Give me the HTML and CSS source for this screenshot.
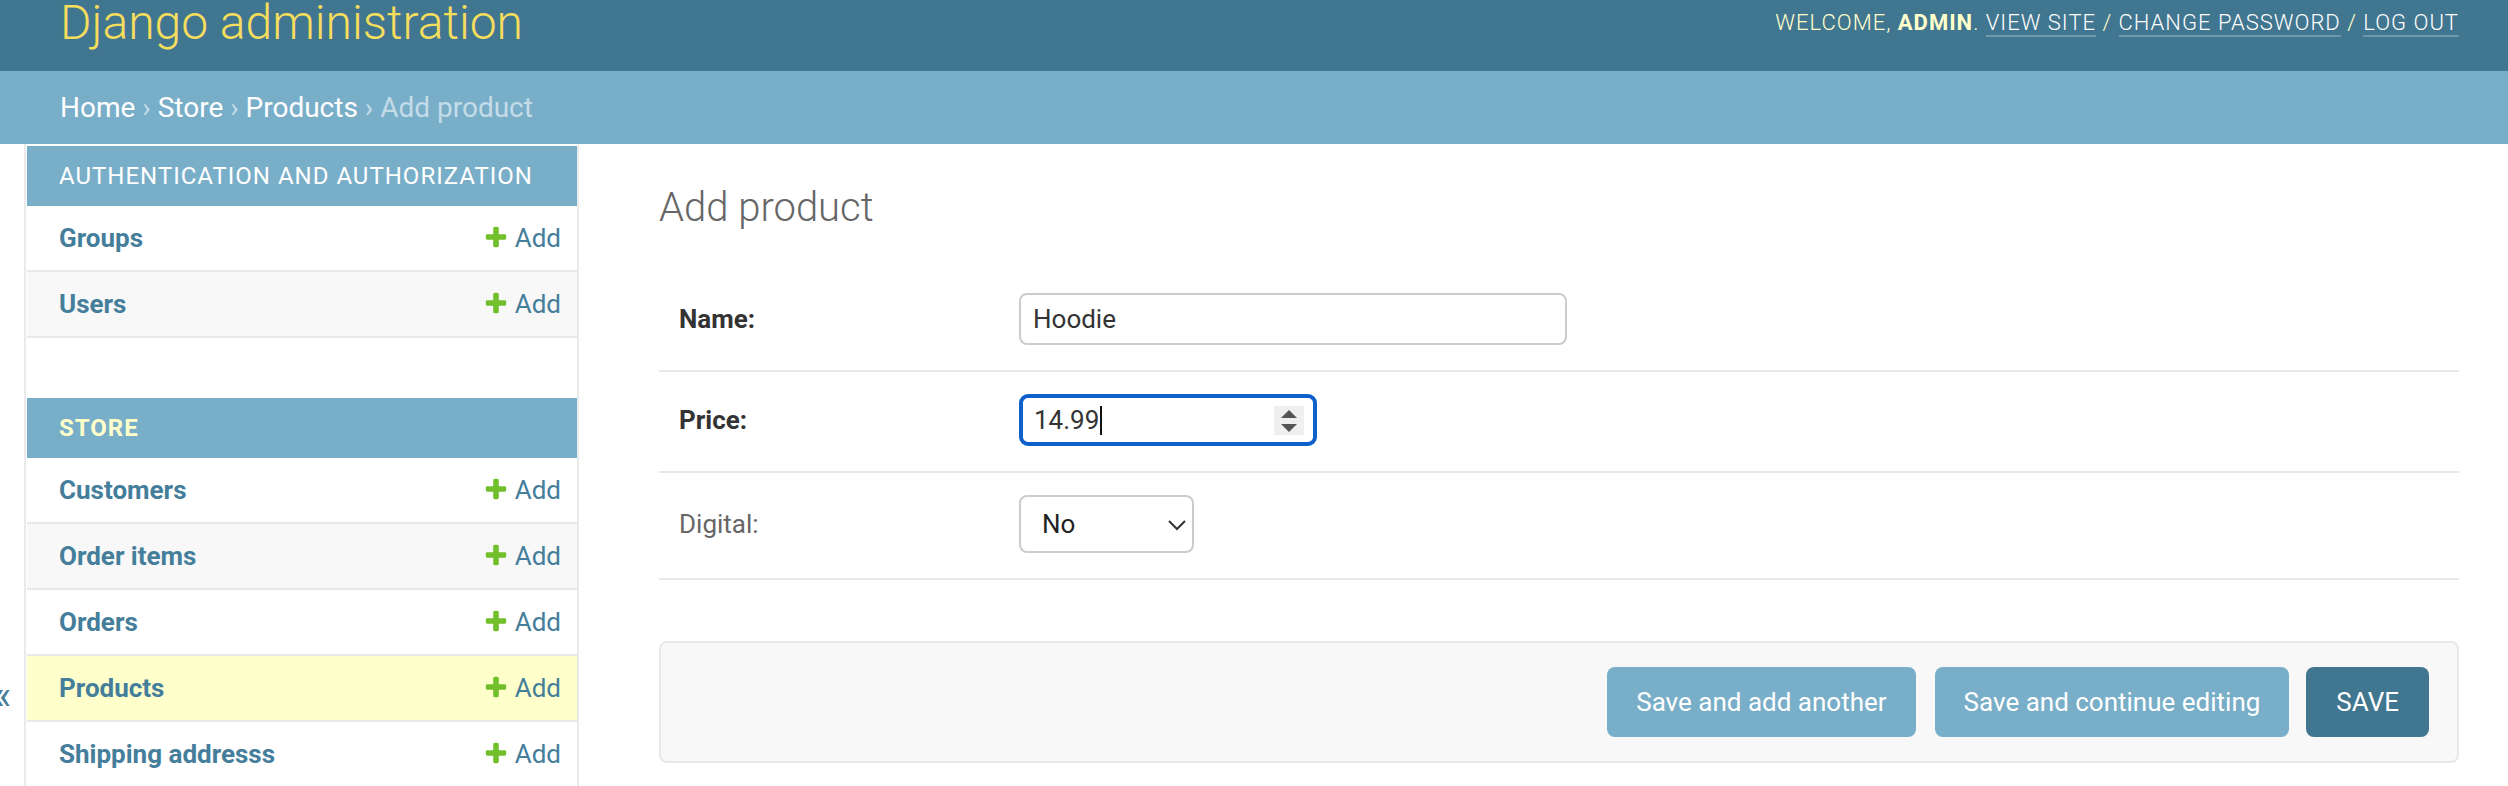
FILE: index.html
```html
<!DOCTYPE html>
<html lang="en">
<head>
<meta charset="utf-8">
<title>Add product | Django site admin</title>
<link rel="stylesheet" href="styles.css">
</head>
<body>
<div class="page">
  <header class="header">
    <h1 class="site-name">Django administration</h1>
    <div class="user-tools">Welcome, <strong>admin</strong>. <a href="#">View site</a> / <a href="#">Change password</a> / <a href="#">Log out</a></div>
  </header>
  <nav class="breadcrumbs"><a href="#">Home</a> › <a href="#">Store</a> › <a href="#">Products</a> › Add product</nav>
  <div class="main">
    <button class="toggle-nav" type="button">«</button>
    <aside class="sidebar">
      <div class="module">
        <table>
          <caption><a class="section" href="#">Authentication and Authorization</a></caption>
          <tbody>
            <tr><th><a href="#">Groups</a></th><td><a class="addlink" href="#"><svg class="plus" viewBox="0 0 1792 1792"><path fill="#70bf2b" d="M1600 796v192q0 40-28 68t-68 28h-416v416q0 40-28 68t-68 28h-192q-40 0-68-28t-28-68v-416h-416q-40 0-68-28t-28-68v-192q0-40 28-68t68-28h416v-416q0-40 28-68t68-28h192q40 0 68 28t28 68v416h416q40 0 68 28t28 68z"/></svg>Add</a></td></tr>
            <tr><th><a href="#">Users</a></th><td><a class="addlink" href="#"><svg class="plus" viewBox="0 0 1792 1792"><path fill="#70bf2b" d="M1600 796v192q0 40-28 68t-68 28h-416v416q0 40-28 68t-68 28h-192q-40 0-68-28t-28-68v-416h-416q-40 0-68-28t-28-68v-192q0-40 28-68t68-28h416v-416q0-40 28-68t68-28h192q40 0 68 28t28 68v416h416q40 0 68 28t28 68z"/></svg>Add</a></td></tr>
          </tbody>
        </table>
      </div>
      <div class="module current-app">
        <table>
          <caption><a class="section" href="#">Store</a></caption>
          <tbody>
            <tr><th><a href="#">Customers</a></th><td><a class="addlink" href="#"><svg class="plus" viewBox="0 0 1792 1792"><path fill="#70bf2b" d="M1600 796v192q0 40-28 68t-68 28h-416v416q0 40-28 68t-68 28h-192q-40 0-68-28t-28-68v-416h-416q-40 0-68-28t-28-68v-192q0-40 28-68t68-28h416v-416q0-40 28-68t68-28h192q40 0 68 28t28 68v416h416q40 0 68 28t28 68z"/></svg>Add</a></td></tr>
            <tr><th><a href="#">Order items</a></th><td><a class="addlink" href="#"><svg class="plus" viewBox="0 0 1792 1792"><path fill="#70bf2b" d="M1600 796v192q0 40-28 68t-68 28h-416v416q0 40-28 68t-68 28h-192q-40 0-68-28t-28-68v-416h-416q-40 0-68-28t-28-68v-192q0-40 28-68t68-28h416v-416q0-40 28-68t68-28h192q40 0 68 28t28 68v416h416q40 0 68 28t28 68z"/></svg>Add</a></td></tr>
            <tr><th><a href="#">Orders</a></th><td><a class="addlink" href="#"><svg class="plus" viewBox="0 0 1792 1792"><path fill="#70bf2b" d="M1600 796v192q0 40-28 68t-68 28h-416v416q0 40-28 68t-68 28h-192q-40 0-68-28t-28-68v-416h-416q-40 0-68-28t-28-68v-192q0-40 28-68t68-28h416v-416q0-40 28-68t68-28h192q40 0 68 28t28 68v416h416q40 0 68 28t28 68z"/></svg>Add</a></td></tr>
            <tr class="current-model"><th><a href="#">Products</a></th><td><a class="addlink" href="#"><svg class="plus" viewBox="0 0 1792 1792"><path fill="#70bf2b" d="M1600 796v192q0 40-28 68t-68 28h-416v416q0 40-28 68t-68 28h-192q-40 0-68-28t-28-68v-416h-416q-40 0-68-28t-28-68v-192q0-40 28-68t68-28h416v-416q0-40 28-68t68-28h192q40 0 68 28t28 68v416h416q40 0 68 28t28 68z"/></svg>Add</a></td></tr>
            <tr><th><a href="#">Shipping addresss</a></th><td><a class="addlink" href="#"><svg class="plus" viewBox="0 0 1792 1792"><path fill="#70bf2b" d="M1600 796v192q0 40-28 68t-68 28h-416v416q0 40-28 68t-68 28h-192q-40 0-68-28t-28-68v-416h-416q-40 0-68-28t-28-68v-192q0-40 28-68t68-28h416v-416q0-40 28-68t68-28h192q40 0 68 28t28 68v416h416q40 0 68 28t28 68z"/></svg>Add</a></td></tr>
          </tbody>
        </table>
      </div>
    </aside>
    <main class="content">
      <h1 class="page-title">Add product</h1>
      <form>
        <fieldset class="fieldset">
          <div class="form-row">
            <label class="required">Name:</label>
            <div class="text-box name-box">Hoodie</div>
          </div>
          <div class="form-row">
            <label class="required">Price:</label>
            <div class="text-box price-box">
              <span class="value">14.99</span><span class="caret"></span>
              <span class="spinner"><svg viewBox="0 0 30 29" width="30" height="29"><polygon points="7,12 15,4 23,12" fill="#555"/><polygon points="7,18 23,18 15,26" fill="#555"/></svg></span>
            </div>
          </div>
          <div class="form-row">
            <label>Digital:</label>
            <div class="select-box"><span class="value">No</span><svg class="chevron" viewBox="0 0 18 11" width="18" height="11"><path d="M1 1 L9 9 L17 1" fill="none" stroke="#333" stroke-width="2"/></svg></div>
          </div>
        </fieldset>
        <div class="submit-row">
          <button class="btn" type="button">Save and add another</button>
          <button class="btn" type="button">Save and continue editing</button>
          <button class="btn default" type="button">Save</button>
        </div>
      </form>
    </main>
  </div>
</div>
</body>
</html>
```
FILE: styles.css
```css
* { box-sizing: border-box; }
html, body { margin: 0; padding: 0; }
body {
  overflow: hidden;
  background: #fff;
  color: #333;
  font-family: Roboto, "Liberation Sans", sans-serif;
}
.page {
  width: 2559px;
  margin: -25px 0 0 -20px;
}
a { color: #447e9b; text-decoration: none; }

/* header */
.header {
  display: flex;
  justify-content: space-between;
  align-items: center;
  padding: 20px 80px;
  background: #417690;
  color: #ffc;
}
.site-name {
  margin: 0 40px 0 0;
  font-size: 48px;
  line-height: 56px;
  font-weight: 300;
  color: #f5dd5d;
}
.user-tools {
  font-size: 22px;
  line-height: 28px;
  letter-spacing: 1px;
  text-transform: uppercase;
  font-weight: 300;
}
.user-tools strong { font-weight: 700; }
.user-tools a {
  color: #fff;
  border-bottom: 2px solid rgba(255, 255, 255, 0.25);
}

/* breadcrumbs */
.breadcrumbs {
  padding: 20px 80px;
  background: #79aec8;
  color: #c4dce8;
  font-size: 28px;
  line-height: 33px;
}
.breadcrumbs a { color: #fff; }

/* main */
.main {
  display: flex;
  height: 1102px;
}
.toggle-nav {
  flex: 0 0 46px;
  display: flex;
  align-items: center;
  justify-content: center;
  padding: 0;
  border: 0;
  border-right: 2px solid #eaeaea;
  background: #fff;
  color: #447e9b;
  font-family: inherit;
  font-size: 40px;
}
.sidebar {
  flex: 0 0 552px;
  margin-left: 1px;
  border-top: 2px solid transparent;
  border-right: 2px solid #eaeaea;
  overflow: hidden;
}
.module { margin-bottom: 60px; }
.module table {
  width: 100%;
  border-collapse: collapse;
}
.module caption {
  padding: 16px 16px 16px 32px;
  text-align: left;
  background: #79aec8;
  font-size: 24px;
  line-height: 28px;
  letter-spacing: 1px;
  text-transform: uppercase;
  font-weight: 400;
}
.section { color: #fff; }
.current-app .section { color: #ffc; font-weight: 700; }
.module th, .module td {
  padding: 16px;
  font-size: 26px;
  line-height: 32px;
  border-bottom: 2px solid #e8e8e8;
  vertical-align: top;
}
.module th {
  width: 100%;
  padding-left: 32px;
  text-align: left;
  font-weight: 700;
}
.module td { white-space: nowrap; }
.module tbody tr:nth-child(even) { background: #f8f8f8; }
.module tbody tr.current-model { background: #ffc; }
.addlink { font-weight: 400; }
.plus {
  width: 26px;
  height: 26px;
  margin: 2px 6px 0 0;
  vertical-align: top;
}

/* content */
.content {
  flex: 1;
  min-width: 0;
  padding: 40px 80px;
}
.page-title {
  margin: 0 0 40px;
  font-size: 40px;
  line-height: 47px;
  font-weight: 300;
  color: #666;
}
.fieldset {
  margin: 0 0 61px;
  padding: 0;
  border: 0;
  min-width: 0;
}
.form-row {
  display: flex;
  align-items: center;
  padding: 22px 20px 25px;
  border-bottom: 2px solid #e8e8e8;
  font-size: 26px;
}
.form-row label {
  flex: 0 0 340px;
  padding-right: 20px;
  line-height: 1;
  color: #666;
}
.form-row label.required {
  color: #333;
  font-weight: 700;
}
.text-box {
  display: flex;
  align-items: center;
  width: 548px;
  height: 52px;
  padding: 0 12px;
  border: 2px solid #ccc;
  border-radius: 8px;
  color: #333;
  font-size: 26px;
}
.price-box {
  width: 298px;
  padding: 0 9px 0 11px;
  border: 4px solid #1060cc;
  border-radius: 9px;
}
.caret {
  width: 2px;
  height: 29px;
  margin-left: 1px;
  background: #111;
}
.spinner {
  display: flex;
  margin-left: auto;
  background: #efefef;
}
.select-box {
  display: flex;
  align-items: center;
  justify-content: space-between;
  width: 175px;
  height: 58px;
  padding: 0 6px 0 21px;
  border: 2px solid #ccc;
  border-radius: 8px;
  color: #222;
  font-size: 26px;
}
.chevron { margin-top: 2px; }

/* submit row */
.submit-row {
  display: flex;
  justify-content: flex-end;
  padding: 24px 28px;
  background: #f8f8f8;
  border: 2px solid #e8e8e8;
  border-radius: 8px;
}
.btn {
  height: 70px;
  margin-left: 19px;
  padding: 0 29px;
  border: 0;
  border-radius: 8px;
  background: #79aec8;
  color: #fff;
  font-family: Roboto, "Liberation Sans", sans-serif;
  font-size: 26px;
  line-height: 30px;
  font-weight: 400;
}
.btn.default {
  margin-left: 17px;
  padding: 0 30px;
  background: #417690;
  text-transform: uppercase;
}
```
